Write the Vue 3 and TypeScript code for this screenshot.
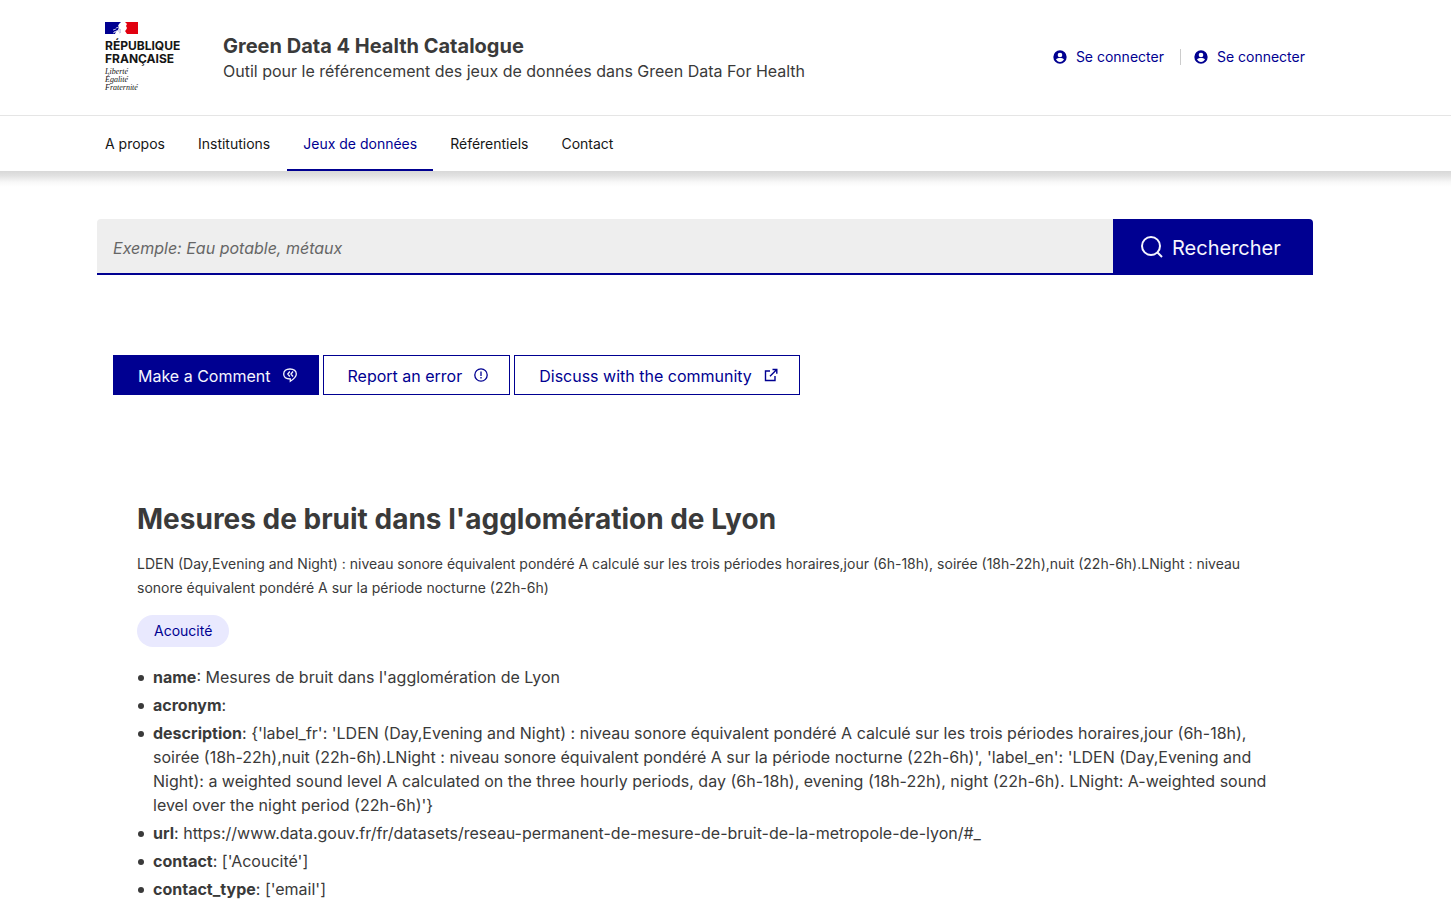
<script setup lang="ts">
import { ref } from 'vue'

interface NavItem {
  label: string
  active?: boolean
}

const nav: NavItem[] = [
  { label: 'A propos' },
  { label: 'Institutions' },
  { label: 'Jeux de données', active: true },
  { label: 'Référentiels' },
  { label: 'Contact' },
]

const query = ref('')

const fields: { key: string; value: string }[] = [
  { key: 'name', value: "Mesures de bruit dans l'agglomération de Lyon" },
  { key: 'acronym', value: '' },
  {
    key: 'description',
    value:
      "{'label_fr': 'LDEN (Day,Evening and Night) : niveau sonore équivalent pondéré A calculé sur les trois périodes horaires,jour (6h-18h), soirée (18h-22h),nuit (22h-6h).LNight : niveau sonore équivalent pondéré A sur la période nocturne (22h-6h)', 'label_en': 'LDEN (Day,Evening and Night): a weighted sound level A calculated on the three hourly periods, day (6h-18h), evening (18h-22h), night (22h-6h). LNight: A-weighted sound level over the night period (22h-6h)'}",
  },
  { key: 'url', value: 'https://www.data.gouv.fr/fr/datasets/reseau-permanent-de-mesure-de-bruit-de-la-metropole-de-lyon/#_' },
  { key: 'contact', value: "['Acoucité']" },
  { key: 'contact_type', value: "['email']" },
]
</script>

<template>
  <div class="page">
    <header class="header">
      <div class="header-body">
        <div class="container brand-row">
          <a class="logo" href="#" aria-label="République Française">
            <svg class="flag" viewBox="0 0 33 12" aria-hidden="true">
              <path fill="#000091" d="M0 0h16l-2 2-1 2 1 1-1 3-2 1-1 3H0z" />
              <path fill="#e1000f" d="M20 0h13v12H22l-2-3 1-1 1-2-1-2 1-2z" />
              <path fill="none" stroke="#c9c9e6" stroke-width=".9" d="M8 8l3-1m-2 3 3-1m-1-3 3-1m-6 6 2-1" />
              <path fill="none" stroke="#8c8cc4" stroke-width=".6" d="M14 7l2 1m-3 1h3m-2 2 2-1" />
            </svg>
            <span class="logo-name">RÉPUBLIQUE<br />FRANÇAISE</span>
            <span class="motto">Liberté<br />Égalité<br />Fraternité</span>
          </a>
          <div class="service">
            <p class="service-title">Green Data 4 Health Catalogue</p>
            <p class="service-tagline">Outil pour le référencement des jeux de données dans Green Data For Health</p>
          </div>
          <ul class="tools">
            <li v-for="n in 2" :key="n">
              <a href="#">
                <svg viewBox="0 0 24 24" aria-hidden="true">
                  <path
                    fill="currentColor"
                    fill-rule="evenodd"
                    d="M12 2a10 10 0 1 0 0 20 10 10 0 0 0 0-20zm0 3.500a3.500 3.500 0 1 1 0 7 3.500 3.500 0 0 1 0-7zM6 15.500c1.500-1.300 3.600-2 6-2s4.500.7 6 2c-1.200 2.500-3.400 4-6 4s-4.800-1.500-6-4z"
                  />
                </svg>
                Se connecter
              </a>
            </li>
          </ul>
        </div>
      </div>
      <nav class="container nav" aria-label="Menu principal">
        <a v-for="item in nav" :key="item.label" href="#" :class="{ active: item.active }">{{ item.label }}</a>
      </nav>
    </header>

    <main class="main">
      <form class="search" role="search" @submit.prevent>
        <input v-model="query" type="search" aria-label="Rechercher" placeholder="Exemple: Eau potable, métaux" />
        <button type="submit">
          <svg viewBox="0 0 24 24" fill="none" stroke="currentColor" stroke-width="2" aria-hidden="true">
            <circle cx="11" cy="11" r="9" />
            <path d="M17.500 17.500l4.500 4.500" />
          </svg>
          Rechercher
        </button>
      </form>

      <div class="actions">
        <button class="btn primary" type="button">
          Make a Comment
          <svg viewBox="0 0 16 16" fill="none" stroke="currentColor" stroke-width="1.300" aria-hidden="true">
            <path d="M8 2c4 0 6.300 2 6.300 5 0 3.200-2.500 5-6 7.200v-2.200C4 12 1.700 10 1.700 7S4 2 8 2z" />
            <path d="M7.800 4.500L5.800 7l2 2.500M11 4.500L9 7l2 2.500" />
          </svg>
        </button>
        <button class="btn" type="button">
          Report an error
          <svg viewBox="0 0 16 16" fill="none" stroke="currentColor" stroke-width="1.300" aria-hidden="true">
            <circle cx="8" cy="8" r="6.200" />
            <path d="M8 4.500v4.500M8 10v1.500" />
          </svg>
        </button>
        <button class="btn" type="button">
          Discuss with the community
          <svg viewBox="0 0 16 16" fill="none" stroke="currentColor" stroke-width="1.400" aria-hidden="true">
            <path d="M7 4H2.500v9.500H12V9M9.500 2.500h4.300v4.300M13.500 2.800L7 9.300" />
          </svg>
        </button>
      </div>

      <article class="dataset">
        <h1>Mesures de bruit dans l'agglomération de Lyon</h1>
        <p class="summary">
          LDEN (Day,Evening and Night) : niveau sonore équivalent pondéré A calculé sur les trois périodes
          horaires,jour (6h-18h), soirée (18h-22h),nuit (22h-6h).LNight : niveau sonore équivalent pondéré A sur la
          période nocturne (22h-6h)
        </p>
        <a class="tag" href="#">Acoucité</a>
        <ul class="fields">
          <li v-for="f in fields" :key="f.key"><strong>{{ f.key }}</strong>: {{ f.value }}</li>
        </ul>
      </article>
    </main>
  </div>
</template>

<style>
body {
  margin: 0;
  background: #fff;
}
html {
  overflow: hidden;
}
</style>

<style scoped>
.page {
  font-family: Inter, "Noto Sans", sans-serif;
  font-size: 16px;
  line-height: 24px;
  color: #3a3a3a;
}
.page * {
  box-sizing: border-box;
}
a {
  color: inherit;
  text-decoration: none;
}
p,
h1,
ul {
  margin: 0;
  padding: 0;
}
button,
input {
  font: inherit;
  margin: 0;
  border: 0;
}
.container {
  margin: 0 146px 0 105px;
}
.header {
  position: relative;
}
.header::after {
  content: "";
  position: absolute;
  top: 100%;
  left: 0;
  right: 0;
  height: 16px;
  background: linear-gradient(#d8d8d8, #e2e2e2 30%, #f8f8f8 70%, #fff);
}
.header-body {
  border-bottom: 1px solid #e5e5e5;
}
.brand-row {
  display: flex;
  align-items: center;
  height: 115px;
}
.logo {
  width: 118px;
  color: #161616;
}
.flag {
  display: block;
  width: 33px;
  height: 12px;
  margin-bottom: 5px;
}
.logo-name {
  display: block;
  font-size: 12px;
  line-height: 13px;
  font-weight: 700;
}
.motto {
  display: block;
  margin-top: 3px;
  font-family: "Liberation Serif", serif;
  font-style: italic;
  font-size: 8px;
  line-height: 8px;
  padding-bottom: 1px;
}
.service {
  flex: 1;
  padding-bottom: 2px;
}
.service-title {
  font-size: 20px;
  line-height: 28px;
  font-weight: 700;
}
.service-tagline {
  line-height: 22px;
  white-space: nowrap;
}
.tools {
  display: flex;
  padding-bottom: 2px;
  list-style: none;
  font-size: 14px;
  color: #000091;
}
.tools li + li {
  position: relative;
  margin-left: 16px;
  padding-left: 13px;
}
.tools li + li::before {
  content: "";
  position: absolute;
  left: 0;
  top: 4px;
  height: 16px;
  width: 1px;
  background: #ccc;
}
.tools a {
  display: flex;
  align-items: center;
  gap: 8px;
}
.tools svg {
  width: 16px;
  height: 16px;
}
.nav {
  display: flex;
  gap: 33px;
  height: 55px;
  font-size: 14px;
  color: #161616;
}
.nav a {
  padding: 16px 0;
}
.nav .active {
  margin: 0 -16px;
  padding: 16px 16px 14px;
  color: #000091;
  border-bottom: 2px solid #000091;
}
.main {
  margin: 48px 138px 0 97px;
}
.search {
  display: flex;
  height: 56px;
}
.search input {
  flex: 1;
  min-width: 0;
  padding: 3px 16px 0;
  background: #eee;
  border-bottom: 2px solid #000091;
  border-radius: 4px 0 0 0;
}
.search input::placeholder {
  color: #666;
  opacity: 1;
  font-style: italic;
}
.search button {
  display: flex;
  align-items: center;
  gap: 8px;
  width: 200px;
  padding: 2px 0 0 27px;
  background: #000091;
  color: #f5f5fe;
  font-size: 20px;
  border-radius: 0 4px 0 0;
}
.search svg {
  width: 24px;
  height: 24px;
  margin-bottom: 2px;
}
.actions {
  display: flex;
  gap: 4px;
  margin: 80px 16px 0;
}
.btn {
  display: flex;
  align-items: center;
  gap: 11px;
  height: 40px;
  padding: 1px 20px 0 24px;
  border: 1px solid #000091;
  background: #fff;
  color: #000091;
  white-space: nowrap;
}
.btn svg {
  width: 16px;
  height: 16px;
  margin-bottom: 2px;
}
.primary {
  background: #000091;
  color: #f5f5fe;
}
.dataset {
  margin: 104px 40px 0;
}
h1 {
  font-size: 28px;
  line-height: 40px;
  font-weight: 700;
}
.summary {
  margin-top: 13px;
  font-size: 14px;
}
.tag {
  display: block;
  width: fit-content;
  margin-top: 15px;
  padding: 4px 17px;
  border-radius: 16px;
  background: #e9e9fe;
  color: #000091;
  font-size: 14px;
}
.fields {
  margin-top: 18px;
  padding-left: 16px;
  list-style: none;
}
.fields li {
  position: relative;
  padding-bottom: 4px;
}
.fields li::before {
  content: "";
  position: absolute;
  left: -15px;
  top: 10px;
  width: 6px;
  height: 6px;
  border-radius: 50%;
  background: #3a3a3a;
}
</style>
